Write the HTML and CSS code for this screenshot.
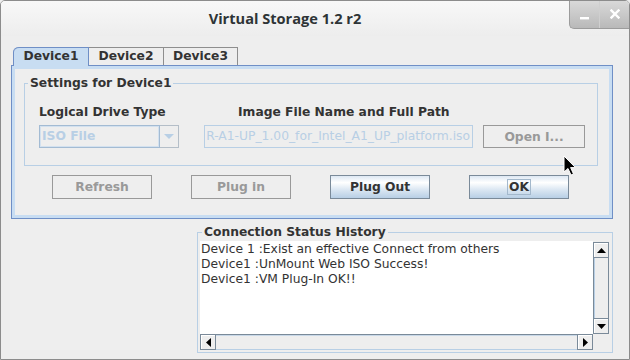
FILE: index.html
```html
<!DOCTYPE html>
<html>
<head>
<meta charset="utf-8">
<link rel="stylesheet" href="styles.css">
</head>
<body>
<div class="window">
  <div class="titlebar">
    <div class="title">Virtual Storage 1.2 r2</div>
    <div class="wm-buttons">
      <div class="wm-btn wm-min"><svg width="10" height="4" viewBox="0 0 10 4"><rect x="0" y="1" width="9" height="2.4" fill="#fff"/></svg></div>
      <div class="wm-btn wm-close"><svg width="10" height="10" viewBox="0 0 10 10"><path d="M1.5 1.5 L8.5 8.5 M8.5 1.5 L1.5 8.5" stroke="#fff" stroke-width="2.4" stroke-linecap="square"/></svg></div>
    </div>
  </div>
  <div class="client">
    <div class="tabs">
      <div class="tab tab-selected">Device1</div>
      <div class="tab">Device2</div>
      <div class="tab tab-last">Device3</div>
    </div>
    <div class="tab-panel">
      <fieldset class="titled settings">
        <legend class="legend-settings">Settings for Device1</legend>
        <div class="settings-grid">
          <div class="lbl">Logical Drive Type</div>
          <div class="lbl lbl-path">Image File Name and Full Path</div>
          <div></div>
          <div class="combo">
            <div class="combo-text">ISO File</div>
            <div class="combo-arrow"><svg width="10" height="6" viewBox="0 0 10 6"><polygon points="0,0 10,0 5,5" fill="#b8cfe5"/></svg></div>
          </div>
          <div class="textfield"><span>R-A1-UP_1.00_for_Intel_A1_UP_platform.iso</span></div>
          <div class="btn btn-disabled btn-open">Open I...</div>
        </div>
      </fieldset>
      <div class="btn-row">
        <div class="btn btn-disabled">Refresh</div>
        <div class="btn btn-disabled">Plug in</div>
        <div class="btn btn-enabled">Plug Out</div>
        <div class="btn btn-enabled"><span class="focus">OK</span></div>
      </div>
    </div>
    <fieldset class="titled history">
      <legend class="legend-history">Connection Status History</legend>
      <div class="scrollpane">
        <div class="textarea">
          <div>Device 1 :Exist an effective Connect from others</div>
          <div>Device1 :UnMount Web ISO Success!</div>
          <div>Device1 :VM Plug-In OK!!</div>
        </div>
        <div class="vscroll">
          <div class="sb-btn"><svg width="9" height="5" viewBox="0 0 9 5"><polygon points="4.5,0 9,5 0,5" fill="#000"/></svg></div>
          <div class="sb-track-v"></div>
          <div class="sb-btn"><svg width="9" height="5" viewBox="0 0 9 5"><polygon points="0,0 9,0 4.5,5" fill="#000"/></svg></div>
        </div>
        <div class="hscroll">
          <div class="sb-btn"><svg width="5" height="9" viewBox="0 0 5 9"><polygon points="0,4.5 5,0 5,9" fill="#000"/></svg></div>
          <div class="sb-thumb-h"></div>
          <div class="sb-btn"><svg width="5" height="9" viewBox="0 0 5 9"><polygon points="0,0 5,4.5 0,9" fill="#000"/></svg></div>
        </div>
        <div class="sb-corner"></div>
      </div>
    </fieldset>
  </div>
  <svg class="cursor" width="14" height="22" viewBox="0 0 14 22"><path d="M1 1 L1 17 L5 13.5 L8 20 L10.5 19 L7.6 12.6 L12.5 12.6 Z" fill="#000" stroke="#fff" stroke-width="1" stroke-linejoin="round"/></svg>
</div>
</body>
</html>
```
FILE: styles.css
```css
html, body {
  margin: 0;
  padding: 0;
  background: #eeeeee;
}
body {
  font-family: "DejaVu Sans", sans-serif;
  color: #333333;
}
.window {
  width: 630px;
  height: 360px;
  box-sizing: border-box;
  border: 1px solid #8c8c8c;
  border-radius: 5px 5px 0 0;
  background: #eeeeee;
  display: flex;
  flex-direction: column;
  position: relative;
  overflow: hidden;
}
.titlebar {
  height: 35px;
  flex: none;
  display: flex;
  background: linear-gradient(#f8f8f8, #ededed);
}
.title {
  flex: 1;
  text-align: center;
  font-family: "Open Sans", sans-serif;
  font-weight: bold;
  font-size: 14.6px;
  line-height: 18px;
  padding-top: 8px;
  color: #2e3436;
}
.wm-buttons {
  width: 60px;
  height: 29px;
  margin-top: -1px;
  display: flex;
  box-sizing: border-box;
  border-left: 1px solid #9c9c9c;
  border-bottom: 1px solid #9c9c9c;
  border-bottom-left-radius: 5px;
  background: linear-gradient(#dadada, #b9b9b9);
}
.wm-btn {
  flex: 1;
  display: flex;
  align-items: center;
  justify-content: center;
}
.wm-min {
  border-right: 1px solid #cfcfcf;
  padding-top: 8px;
}
.wm-close {
  padding-bottom: 1px;
}
.client {
  flex: 1;
  padding: 11px 0 0 10px;
}
.tabs {
  display: flex;
  margin-left: 2px;
  height: 18px;
}
.tab {
  width: 76px;
  height: 18px;
  box-sizing: border-box;
  margin-right: -1px;
  border: 1px solid #8e8e8e;
  border-bottom: none;
  font-weight: bold;
  font-size: 12.3px;
  line-height: 17px;
  text-align: center;
  color: #333333;
  background: #eeeeee;
}
.tab-last {
  width: 75px;
}
.tab-selected {
  height: 19px;
  background: #c8ddf2;
  border-color: #6f8fc6;
  border-top-left-radius: 6px 5px;
  position: relative;
  z-index: 1;
}
.tab-panel {
  width: 602px;
  height: 154px;
  box-sizing: border-box;
  border: 1px solid #6f8fc6;
  box-shadow: inset 0 0 0 3px #c8ddf2;
}
.titled {
  margin: 0;
  padding: 0;
  border: 1px solid #b8cfe5;
  min-width: 0;
  box-sizing: border-box;
}
.titled legend {
  font-weight: bold;
  font-size: 12.3px;
  line-height: 15px;
  color: #333333;
  padding: 0 2px;
}
.legend-settings {
  margin-left: 3px;
}
.legend-history {
  margin-left: 2px;
}
.settings {
  width: 574px;
  margin: 10px 0 0 12px;
  padding: 0 0 17px 0;
}
.settings-grid {
  display: grid;
  grid-template-columns: 165px 279px 102px;
  row-gap: 5px;
  padding: 14px 0 0 14px;
}
.lbl {
  font-weight: bold;
  font-size: 12.3px;
  line-height: 15px;
  white-space: nowrap;
}
.lbl-path {
  margin-left: 34px;
}
.combo {
  width: 140px;
  height: 23px;
  display: flex;
}
.combo-text {
  flex: 1;
  box-sizing: border-box;
  border: 1px solid #a3bbd3;
  box-shadow: inset 0 0 0 1px #d3e1ef;
  font-weight: bold;
  font-size: 12.3px;
  line-height: 21px;
  padding-left: 2px;
  color: #b8cfe5;
}
.combo-arrow {
  width: 19px;
  box-sizing: border-box;
  border: 1px solid #b4bec8;
  border-left: none;
  display: flex;
  align-items: center;
  justify-content: center;
}
.textfield {
  width: 269px;
  height: 23px;
  box-sizing: border-box;
  border: 1px solid #b8cfe5;
  display: flex;
  justify-content: flex-end;
  overflow: hidden;
  white-space: nowrap;
  padding-right: 2px;
  font-size: 12.3px;
  line-height: 21px;
  color: #b8cfe5;
}
.btn {
  width: 100px;
  height: 24px;
  box-sizing: border-box;
  border: 1px solid #999999;
  display: flex;
  align-items: center;
  justify-content: center;
  font-weight: bold;
  font-size: 12.3px;
  white-space: nowrap;
}
.btn-open {
  width: 102px;
  height: 23px;
}
.btn-disabled {
  color: #999999;
  background: #eeeeee;
}
.btn-enabled {
  color: #333333;
  border-color: #7a8a99;
  background: linear-gradient(#dde8f3 0%, #ffffff 30%, #dde8f3 60%, #b8cfe5 100%);
}
.focus {
  border: 1px solid #a3b8cc;
  padding: 0 1px;
  line-height: 14px;
}
.btn-row {
  display: flex;
  gap: 39px;
  margin-top: 9px;
  padding-left: 40px;
}
.history {
  width: 416px;
  margin: 6px 0 0 186px;
  padding: 1px 2px 1px 2px;
}
.scrollpane {
  height: 110px;
  display: grid;
  grid-template-columns: 1fr 17px;
  grid-template-rows: 1fr 17px;
}
.textarea {
  background: #ffffff;
  padding: 1px 0 0 1px;
  font-size: 12.3px;
  line-height: 15px;
  color: #333333;
  white-space: nowrap;
  overflow: hidden;
}
.vscroll {
  display: flex;
  flex-direction: column;
  background: #eeeeee;
  padding: 1px 0 0 0;
}
.hscroll {
  display: flex;
  background: #eeeeee;
}
.sb-btn {
  width: 16px;
  height: 16px;
  box-sizing: border-box;
  border: 1px solid #7a8a99;
  box-shadow: inset 1px 1px 0 #ffffff;
  background: #eeeeee;
  display: flex;
  align-items: center;
  justify-content: center;
  flex: none;
}
.sb-track-v {
  flex: 1;
  border-left: 1px solid #7a8a99;
  border-right: 1px solid #7a8a99;
  box-shadow: inset 1px 0 0 #b8cfe5;
  width: 16px;
  box-sizing: border-box;
}
.sb-thumb-h {
  flex: 1;
  border-top: 1px solid #7a8a99;
  border-bottom: 1px solid #b8cfe5;
  box-shadow: inset 0 1px 0 #c8d8e8;
  height: 16px;
  box-sizing: border-box;
}
.sb-corner {
  background: #eeeeee;
}
.cursor {
  position: absolute;
  left: 562px;
  top: 154px;
}
```
